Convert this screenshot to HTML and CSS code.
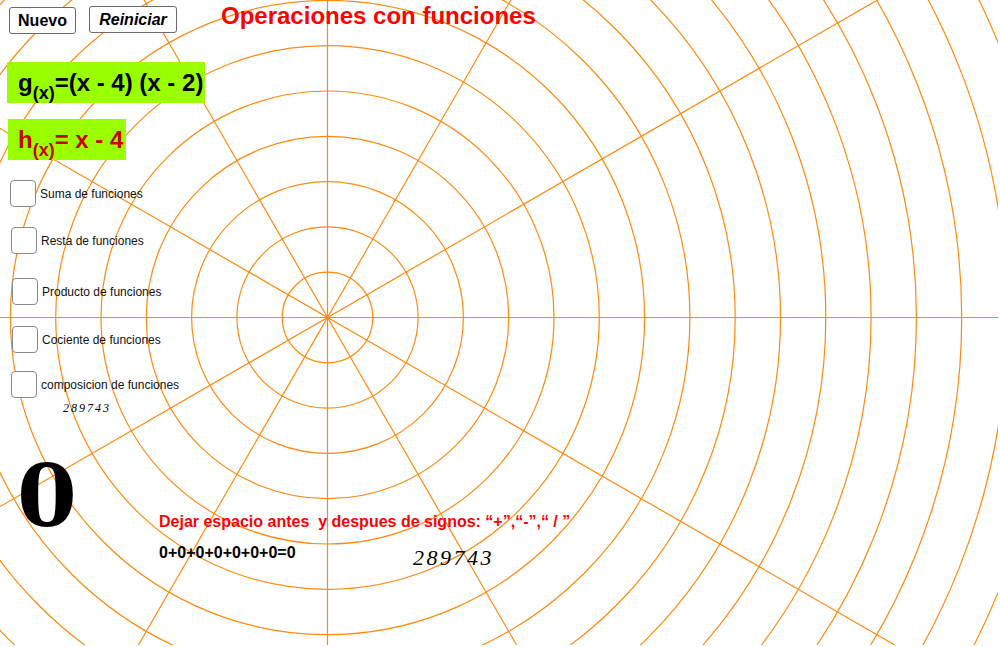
FILE: index.html
```html
<!DOCTYPE html>
<html lang="es">
<head>
<meta charset="utf-8">
<title>Operaciones con funciones</title>
<link rel="stylesheet" href="styles.css">
</head>
<body>
<div class="stage">
  <svg class="grid" width="998" height="645" viewBox="0 0 998 645" xmlns="http://www.w3.org/2000/svg">
    <g transform="translate(327.5 317.5)" fill="none" stroke="#ff8a10" stroke-width="1.2">
      <circle r="45.3"/><circle r="90.6"/><circle r="135.9"/><circle r="181.2"/>
      <circle r="226.5"/><circle r="271.8"/><circle r="317.1"/><circle r="362.4"/>
      <circle r="407.7"/><circle r="453"/><circle r="498.3"/><circle r="543.6"/>
      <circle r="588.9"/><circle r="634.2"/><circle r="679.5"/><circle r="724.8"/>
      <circle r="770.1"/><circle r="815.4"/>
      <line x1="-1200" y1="0" x2="1200" y2="0"/>
      <line x1="-1200" y1="0" x2="1200" y2="0" transform="rotate(30)"/>
      <line x1="-1200" y1="0" x2="1200" y2="0" transform="rotate(60)"/>
      <line x1="-1200" y1="0" x2="1200" y2="0" transform="rotate(90)"/>
      <line x1="-1200" y1="0" x2="1200" y2="0" transform="rotate(120)"/>
      <line x1="-1200" y1="0" x2="1200" y2="0" transform="rotate(150)"/>
    </g>
  </svg>

  <div class="panel">
    <div class="toolbar">
      <button class="btn btn-nuevo">Nuevo</button>
      <button class="btn btn-reiniciar">Reiniciar</button>
    </div>
    <div class="fbox fbox-g"><span>g<span class="sub">(x)</span>=(x - 4) (x - 2)</span></div>
    <div class="fbox fbox-h"><span>h<span class="sub">(x)</span>= x - 4</span></div>

    <div class="row row-1"><span class="chk"></span><span class="lbl">Suma de funciones</span></div>
    <div class="row row-2"><span class="chk"></span><span class="lbl">Resta de funciones</span></div>
    <div class="row row-3"><span class="chk"></span><span class="lbl">Producto de funciones</span></div>
    <div class="row row-4"><span class="chk"></span><span class="lbl">Cociente de funciones</span></div>
    <div class="row row-5"><span class="chk"></span><span class="lbl">composicion de funciones</span></div>
    <div class="digits-small">289743</div>
  </div>

  <div class="title">Operaciones con funciones</div>
  <div class="bigzero">0</div>
  <div class="note">Dejar espacio antes&nbsp; y despues de signos: “+”,“-”,“ / ”</div>
  <div class="equation">0+0+0+0+0+0+0=0</div>
  <div class="digits-large">289743</div>
</div>
</body>
</html>
```

FILE: styles.css
```css
html, body {
  margin: 0;
  padding: 0;
  background: #ffffff;
}

.stage {
  position: relative;
  width: 1000px;
  height: 647px;
  overflow: hidden;
  background: #ffffff;
  font-family: "Liberation Sans", Arial, sans-serif;
  color: #000;
}

.grid {
  position: absolute;
  left: 0;
  top: 0;
}

.panel {
  position: relative;
  display: flex;
  flex-direction: column;
  align-items: flex-start;
  padding-top: 6px;
}

.toolbar {
  display: flex;
  align-items: flex-start;
  gap: 13px;
  margin-left: 9px;
  height: 28px;
}

.btn {
  height: 27px;
  box-sizing: border-box;
  border: 1.5px solid #6b6b6b;
  border-radius: 3px;
  background: #ffffff;
  color: #000;
  font-family: "Liberation Sans", Arial, sans-serif;
  font-weight: bold;
  font-size: 16px;
  padding: 0;
  display: flex;
  align-items: center;
  justify-content: center;
}

.btn-nuevo {
  width: 67px;
  margin-top: 1px;
}

.btn-reiniciar {
  width: 88px;
  font-style: italic;
}

.fbox {
  height: 41px;
  box-sizing: border-box;
  background: #99ff00;
  display: flex;
  align-items: center;
  font-weight: bold;
  font-size: 24px;
  line-height: 28px;
  white-space: nowrap;
}

.fbox-g {
  margin-top: 28px;
  margin-left: 7px;
  width: 198px;
  padding-left: 11px;
  color: #000;
}

.fbox-h {
  margin-top: 16px;
  margin-left: 8px;
  width: 118px;
  padding-left: 10px;
  color: #cc0000;
}

.sub {
  font-size: 18px;
  vertical-align: -8px;
  line-height: 0;
}

.row {
  display: flex;
  align-items: center;
  gap: 4px;
  height: 27px;
}

.row-1 { margin-top: 20px; margin-left: 10px; }
.row-2 { margin-top: 20px; margin-left: 11px; }
.row-3 { margin-top: 24px; margin-left: 12px; }
.row-4 { margin-top: 21px; margin-left: 12px; }
.row-5 { margin-top: 18px; margin-left: 11px; }

.chk {
  width: 26px;
  height: 27px;
  box-sizing: border-box;
  border: 1.5px solid #8a8a8a;
  border-radius: 4px;
  background: #ffffff;
}

.lbl {
  font-size: 12px;
  color: #111;
  white-space: nowrap;
}

.digits-small {
  margin-top: 3px;
  margin-left: 63px;
  font-family: "Liberation Serif", "Times New Roman", serif;
  font-style: italic;
  font-size: 12px;
  letter-spacing: 2px;
}

.title {
  position: absolute;
  left: 221px;
  top: 2px;
  font-weight: bold;
  font-size: 24px;
  line-height: 28px;
  color: #ff0000;
  white-space: nowrap;
}

.bigzero {
  position: absolute;
  left: 17px;
  top: 453px;
  font-family: "DejaVu Serif", serif;
  font-weight: bold;
  font-size: 86px;
  line-height: 86px;
}

.note {
  position: absolute;
  left: 159px;
  top: 513px;
  font-weight: bold;
  font-size: 16px;
  line-height: 18px;
  color: #ff0000;
  white-space: nowrap;
}

.equation {
  position: absolute;
  left: 159px;
  top: 544px;
  font-weight: bold;
  font-size: 16px;
  line-height: 18px;
  white-space: nowrap;
}

.digits-large {
  position: absolute;
  left: 413px;
  top: 545px;
  font-family: "Liberation Serif", "Times New Roman", serif;
  font-style: italic;
  font-size: 22px;
  letter-spacing: 2.5px;
  white-space: nowrap;
}
```
